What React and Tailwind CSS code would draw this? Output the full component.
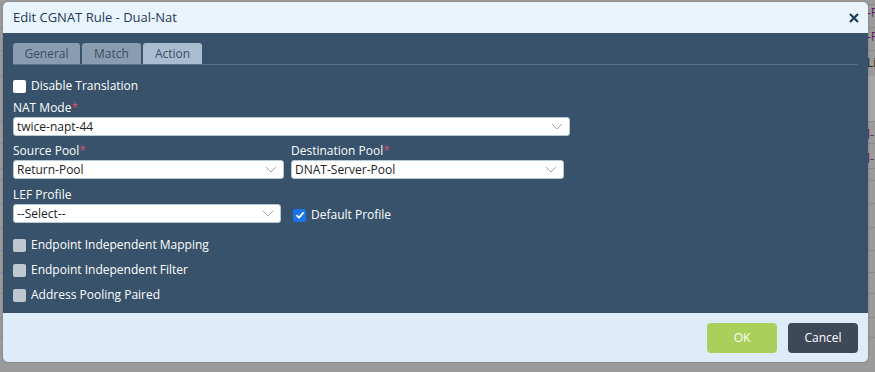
import React from 'react';

const font = { fontFamily: '"Open Sans", "Noto Sans", sans-serif' };

function Chevron() {
  return (
    <svg width="12" height="7" viewBox="0 0 12 7" className="shrink-0">
      <path d="M1 1 L6 6 L11 1" fill="none" stroke="#a3a8ad" strokeWidth="1" />
    </svg>
  );
}

function SelectBox({ value, width }) {
  return (
    <div className={`${width} h-[19px] bg-white rounded-[3px] border border-[#b7c7d4] flex items-center justify-between pl-[3px] pr-[6px] text-[12px] text-[#222]`}>
      <span>{value}</span>
      <Chevron />
    </div>
  );
}

function Label({ text, required }) {
  return (
    <div className="text-[12px] text-white leading-[14px] mb-[2px]">
      {text}
      {required && <span className="text-[#d0506a]">*</span>}
    </div>
  );
}

function Check({ label, checked, disabled }) {
  let box = 'bg-white';
  if (disabled) box = 'bg-[#c0c8cf]';
  if (checked) box = 'bg-[#1a73e8]';
  return (
    <div className="flex items-center gap-[5px] text-[12px] text-white h-[14px]">
      <span className={`w-[13px] h-[13px] rounded-[2px] ${box} flex items-center justify-center`}>
        {checked && (
          <svg width="10" height="10" viewBox="0 0 10 10">
            <path d="M1.5 5.2 L4 7.7 L8.6 2.3" fill="none" stroke="white" strokeWidth="1.8" />
          </svg>
        )}
      </span>
      <span>{label}</span>
    </div>
  );
}

// page table behind the modal, only its right edge shows
function Background() {
  const rows = [4, 27, 50, 76, 121, 143, 168, 180, 203, 227, 250, 272, 293, 317, 337];
  const cells = [
    { top: 5, text: '-P', color: 'text-[#5a1a6a]' },
    { top: 29, text: '-P', color: 'text-[#5a1a6a]' },
    { top: 55, text: 'Li', color: 'text-[#222]' },
    { top: 127, text: 'l-', color: 'text-[#5a1a6a]' },
    { top: 151, text: 'l-', color: 'text-[#5a1a6a]' },
  ];
  return (
    <div className="absolute inset-0 bg-[#9b9b9b]">
      {rows.map((y) => (
        <div key={y} className="absolute left-0 right-0 h-px bg-[#8c8c8c]" style={{ top: y }} />
      ))}
      <div className="absolute right-0 top-[76px] w-[7px] h-[45px] bg-[#a6a6a6]" />
      {cells.map((c) => (
        <div key={c.top} className={`absolute left-[867px] w-[8px] overflow-hidden whitespace-nowrap text-[12px] leading-[16px] ${c.color}`} style={{ top: c.top }}>
          {c.text}
        </div>
      ))}
    </div>
  );
}

export default function App() {
  return (
    <div className="relative w-[875px] h-[372px] overflow-hidden" style={font}>
      <Background />
      <div className="absolute left-[3px] top-[2px] w-[865px] h-[360px] rounded-[5px] overflow-hidden flex flex-col shadow-[0_0_2px_rgba(0,0,0,0.3)]">
        <div className="h-[31px] bg-[#e9f4fd] flex items-center justify-between pl-[10px] pr-[9px]">
          <span className="text-[13px] text-[#1e3a56]">Edit CGNAT Rule - Dual-Nat</span>
          <svg width="10" height="10" viewBox="0 0 10 10">
            <path d="M1 1 L9 9 M9 1 L1 9" stroke="#1c3e5c" strokeWidth="2.2" />
          </svg>
        </div>
        <div className="h-[280px] bg-[#37526a] px-[10px] pt-[10px]">
          <div className="flex gap-[2px] border-b border-[#4f7189] w-[845px] h-[22px]">
            <div className="w-[67px] h-[21px] rounded-t-[3px] bg-[#8a9db0] text-[#3a4d60] text-[12px] flex items-center justify-center">General</div>
            <div className="w-[59px] h-[21px] rounded-t-[3px] bg-[#8a9db0] text-[#3a4d60] text-[12px] flex items-center justify-center">Match</div>
            <div className="w-[59px] h-[21px] rounded-t-[3px] bg-[#a8bdd0] text-[#3a4d60] text-[12px] flex items-center justify-center">Action</div>
          </div>
          <div className="mt-[14px]">
            <Check label="Disable Translation" />
          </div>
          <div className="mt-[8px]">
            <Label text="NAT Mode" required />
            <SelectBox value="twice-napt-44" width="w-[557px]" />
          </div>
          <div className="mt-[8px] flex gap-[7px]">
            <div>
              <Label text="Source Pool" required />
              <SelectBox value="Return-Pool" width="w-[271px]" />
            </div>
            <div>
              <Label text="Destination Pool" required />
              <SelectBox value="DNAT-Server-Pool" width="w-[273px]" />
            </div>
          </div>
          <div className="mt-[9px] flex items-end gap-[12px]">
            <div>
              <Label text="LEF Profile" />
              <SelectBox value="--Select--" width="w-[268px]" />
            </div>
            <div className="pb-[1px]">
              <Check label="Default Profile" checked />
            </div>
          </div>
          <div className="mt-[15px] flex flex-col gap-[11px]">
            <Check label="Endpoint Independent Mapping" disabled />
            <Check label="Endpoint Independent Filter" disabled />
            <Check label="Address Pooling Paired" disabled />
          </div>
        </div>
        <div className="flex-1 bg-[#ddecf8] flex items-center justify-end gap-[11px] pr-[10px]">
          <button className="w-[70px] h-[30px] rounded-[4px] bg-[#a8d05a] text-white text-[12px]">OK</button>
          <button className="w-[70px] h-[30px] rounded-[4px] bg-[#3d4858] text-white text-[12px]">Cancel</button>
        </div>
      </div>
    </div>
  );
}
